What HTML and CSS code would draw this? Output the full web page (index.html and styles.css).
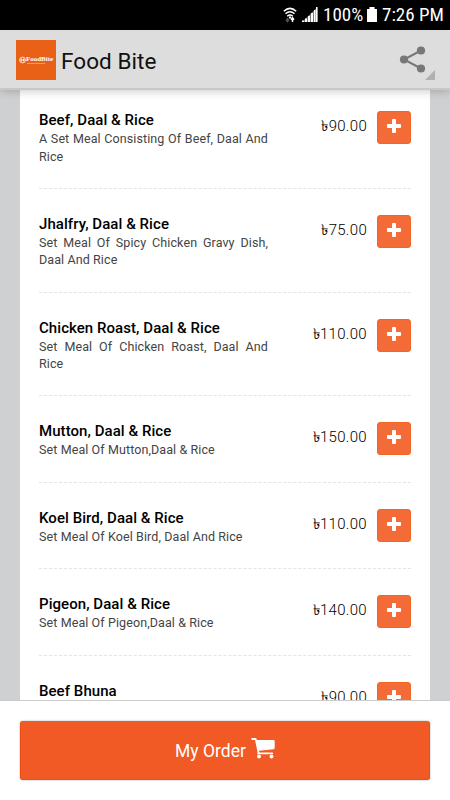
FILE: index.html
```html
<!DOCTYPE html>
<html lang="en">
<head>
<meta charset="utf-8">
<title>Food Bite</title>
<link rel="stylesheet" href="styles.css">
</head>
<body>
<svg width="0" height="0" class="defs"><symbol id="plus" viewBox="0 0 14 14"><path d="M5.9 0h2.2q.9 0 .9.9V5h4.1q.9 0 .9.9v2.2q0 .9-.9.9H9v4.1q0 .9-.9.9H5.900q-.9 0-.9-.9V9H.9Q0 9 0 8.100V5.900Q0 5 .9 5H5V.9Q5 0 5.900 0z" fill="#fff"/></symbol></svg>
<div class="status">
  <svg class="wifi" width="14" height="16" viewBox="0 0 14 16" fill="none" stroke="#fff" stroke-width="1.5"><path d="M.8 4.200Q7-1.500 13.200 4.200M2.500 6.700Q7 2.700 11.500 6.700M4.200 9.200Q7 6.800 9.800 9.200"/><path d="M7 9.500v2" stroke-width="2.200"/><path d="M4.500 11v3M3 12.500l1.500 2 1.500-2" stroke="#555"/><path d="M9.500 15v-4M8 12.700l1.500-2 1.500 2"/></svg>
  <svg class="signal" width="16" height="15" viewBox="0 0 16 15" fill="#fff"><path d="M0 15L15.500 0v15z" fill="#777"/><path d="M0 13.500h2V15H0zM3 11.500h2V15H3zM6 9h2v6H6zM9 6h2v9H9zM12 3h1.500v12H12zM14 0h1.500v15H14z"/></svg>
  <span class="pct">100%</span>
  <svg class="battery" width="10" height="15" viewBox="0 0 10 15"><path d="M2.500 0h5v2H10v13H0V2h2.500z" fill="#fff"/></svg>
  <span class="time">7:26 PM</span>
</div>
<header class="bar">
  <div class="logo"><svg width="7" height="8" viewBox="0 0 7 8" fill="none" stroke="#fff" stroke-width=".8"><circle cx="3.500" cy="4" r="2.900"/><path d="M1 4h5M2.500 2.500v3M4.500 2.500v3"/></svg><div class="brand">FoodBite<i></i></div></div>
  <h1>Food Bite</h1>
  <svg class="share" width="36" height="42" viewBox="0 0 36 42"><path d="M22 11.500L5 20.500l17 9" fill="none" stroke="#777" stroke-width="2"/><g fill="#777"><circle cx="22" cy="11.500" r="4.100"/><circle cx="5" cy="20.500" r="4.100"/><circle cx="22" cy="29.500" r="4.100"/></g><path d="M36 31v10H26z" fill="#b0b0b0"/></svg>
</header>
<main>
  <div class="card">
    <div class="row"><div class="info"><h2>Beef, Daal &amp; Rice</h2><p>A Set Meal Consisting Of Beef, Daal And Rice</p></div><span class="price">৳90.00</span><button><svg><use href="#plus"/></svg></button></div>
    <div class="row"><div class="info"><h2>Jhalfry, Daal &amp; Rice</h2><p>Set Meal Of Spicy Chicken Gravy Dish, Daal And Rice</p></div><span class="price">৳75.00</span><button><svg><use href="#plus"/></svg></button></div>
    <div class="row"><div class="info"><h2>Chicken Roast, Daal &amp; Rice</h2><p>Set Meal Of Chicken Roast, Daal And Rice</p></div><span class="price">৳110.00</span><button><svg><use href="#plus"/></svg></button></div>
    <div class="row"><div class="info"><h2>Mutton, Daal &amp; Rice</h2><p>Set Meal Of Mutton,Daal &amp; Rice</p></div><span class="price">৳150.00</span><button><svg><use href="#plus"/></svg></button></div>
    <div class="row"><div class="info"><h2>Koel Bird, Daal &amp; Rice</h2><p>Set Meal Of Koel Bird, Daal And Rice</p></div><span class="price">৳110.00</span><button><svg><use href="#plus"/></svg></button></div>
    <div class="row"><div class="info"><h2>Pigeon, Daal &amp; Rice</h2><p>Set Meal Of Pigeon,Daal &amp; Rice</p></div><span class="price">৳140.00</span><button><svg><use href="#plus"/></svg></button></div>
    <div class="row"><div class="info"><h2>Beef Bhuna</h2></div><span class="price">৳90.00</span><button><svg><use href="#plus"/></svg></button></div>
  </div>
</main>
<footer>
  <button class="order">My Order <svg width="24" height="21" viewBox="0 0 24 21" fill="#fff"><path d="M.7 0h3.800q.8 0 1 .8L5.800 2H22.500q1.200 0 1.200 1.200V10q0 1-1 1.200L8 12.800l.3 1.700h13q.8 0 .8.900t-.8.900H7q-.8 0-.8-.9l.4-1.200L4 2H.7Q-.2 1 .7 0z"/><circle cx="8" cy="18.500" r="1.900"/><circle cx="20.500" cy="18.500" r="1.900"/></svg></button>
</footer>
</body>
</html>
```

FILE: styles.css
```css
* { box-sizing: border-box; }
body {
  margin: 0;
  width: 450px;
  height: 800px;
  overflow: hidden;
  display: flex;
  flex-direction: column;
  font-family: Roboto, "Noto Sans", sans-serif;
  color: #111;
  background: #fff;
}
h1, h2, p { margin: 0; }
.defs { position: absolute; }
.status {
  flex: none;
  height: 30px;
  background: #000;
  color: #fff;
  display: flex;
  align-items: center;
  justify-content: flex-end;
  padding: 0 7px 1px 0;
  font-family: "Roboto Condensed", Roboto, sans-serif;
  font-size: 19px;
  white-space: nowrap;
}
.wifi { margin-right: 5px; }
.signal { margin-right: 5px; }
.pct { width: 41px; }
.battery { margin: 0 5px 0 3px; }
.time { width: 61px; }
.bar {
  flex: none;
  height: 60px;
  background: #ddd;
  border-bottom: 2px solid #c8c8c8;
  display: flex;
  align-items: center;
  padding: 0 15px 0 16px;
  position: relative;
  z-index: 1;
  box-shadow: 0 1px 9px rgba(0, 0, 0, .22);
}
.logo {
  width: 40px;
  height: 40px;
  margin-top: 2px;
  background: #e96116;
  display: flex;
  align-items: center;
  justify-content: center;
  color: #fff;
}
.brand { font: bold 7px/7px "Liberation Serif", serif; }
.brand i { display: block; width: 18px; border-top: 1px solid #f29c6d; margin-left: 1px; }
h1 { margin: 3px 0 0 5px; font-size: 22.5px; font-weight: 400; letter-spacing: .05px; flex: 1; }
.share { margin-top: 2px; }
main { flex: 1; min-height: 0; overflow: hidden; background: #cfd0d2; padding: 0 20px; }
.card { background: #fff; padding: 0 19px; min-height: 100%; }
.row {
  display: flex;
  align-items: flex-start;
  padding: 26px 0 23.1px;
  border-bottom: 1px dashed #e4e4e4;
}
.row:first-child { padding-top: 21.4px; }
.info { width: 229px; }
h2 { font-size: 15px; line-height: 19px; font-weight: 500; letter-spacing: .06px; color: #000; }
p { font-size: 12.5px; line-height: 17.3px; letter-spacing: .1px; font-weight: 400; text-align: justify; color: #444; }
.price {
  flex: 1;
  text-align: right;
  margin: 6px 10px 0 0;
  font-size: 15px;
  line-height: 18px;
  font-weight: 300;
  letter-spacing: .3px;
  white-space: nowrap;
  color: #000;
}
button { font-family: inherit; padding: 0; }
.row button {
  width: 34px;
  height: 33px;
  margin: 0 0 -15px;
  display: flex;
  align-items: center;
  justify-content: center;
  background: #f36c38;
  border: 1px solid #f26522;
  border-radius: 3px;
}
.row button svg { width: 14px; height: 14px; margin-top: -3px; }
footer { flex: none; height: 100px; background: #fff; border-top: 1px solid #ccc; padding: 20px; }
.order {
  width: 410px;
  height: 59px;
  display: flex;
  align-items: center;
  justify-content: center;
  gap: 5px;
  background: #f15a25;
  border: 1px solid #ed4e16;
  border-top-color: #d9643c;
  border-radius: 3px;
  box-shadow: 0 0 2px rgba(60, 80, 90, .5);
  color: #fff;
  font-size: 17.5px;
}
.order svg { margin-top: -4px; }
```
